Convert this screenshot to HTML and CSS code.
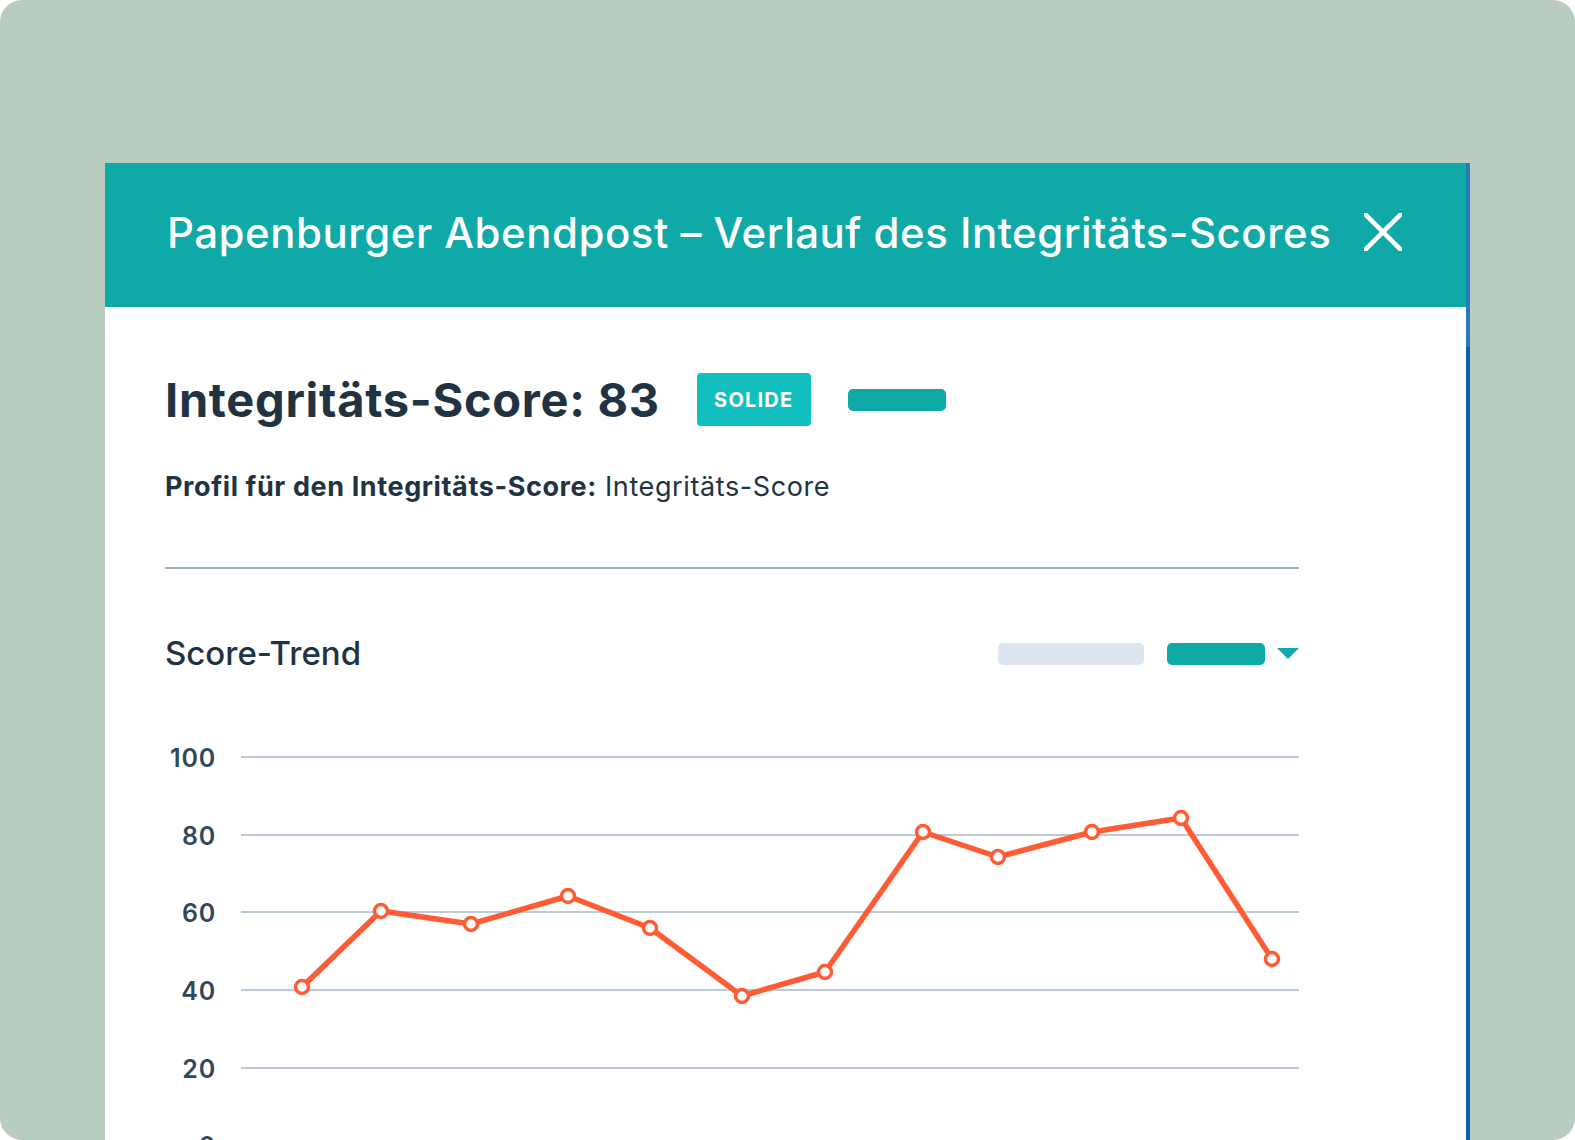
FILE: index.html
```html
<!DOCTYPE html>
<html lang="de">
  <head>
    <meta charset="UTF-8" />
    <meta name="viewport" content="width=device-width, initial-scale=1.0" />
    <title>Integritäts-Score</title>
    <link rel="stylesheet" href="styles.css">
  </head>
  <body>
    <div class="frame">
      <div class="panel">
        <div class="panel-header">
          <h2 class="panel-title">Papenburger Abendpost – Verlauf des Integritäts-Scores</h2>
          <button class="close-btn" aria-label="Schließen">
            <svg width="38" height="38" viewBox="0 0 38 38">
              <line x1="-3" y1="-3" x2="41" y2="41" />
              <line x1="41" y1="-3" x2="-3" y2="41" />
            </svg>
          </button>
        </div>

        <div class="panel-body">
          <div class="score-row">
            <h1 class="score-title">Integritäts-Score: 83</h1>
            <span class="badge">SOLIDE</span>
            <span class="bar bar-teal"></span>
          </div>

          <p class="profile"><strong>Profil für den Integritäts-Score:</strong> Integritäts-Score</p>

          <hr class="divider" />

          <div class="trend-head">
            <h3 class="trend-title">Score-Trend</h3>
            <div class="trend-tools">
              <span class="bar bar-grey"></span>
              <span class="bar bar-teal"></span>
              <span class="caret"></span>
            </div>
          </div>

          <!-- score history, y = 37 + (100 - score) * 3.88 -->
          <svg class="chart" width="1134" height="440" viewBox="0 0 1134 440">
            <g class="grid">
              <line x1="76" y1="37" x2="1134" y2="37" />
              <line x1="76" y1="115" x2="1134" y2="115" />
              <line x1="76" y1="192" x2="1134" y2="192" />
              <line x1="76" y1="270" x2="1134" y2="270" />
              <line x1="76" y1="348" x2="1134" y2="348" />
              <line x1="76" y1="425" x2="1134" y2="425" />
            </g>
            <g class="axis">
              <text x="51" y="38">100</text>
              <text x="51" y="116">80</text>
              <text x="51" y="193">60</text>
              <text x="51" y="271">40</text>
              <text x="51" y="349">20</text>
              <text x="51" y="426">0</text>
            </g>
            <polyline class="trend-line"
              points="137,267 216,191 306,204 403,176 485,208 577,276 660,252 758,112 833,137 927,112 1016,98 1107,239" />
            <g class="dots">
              <circle cx="137" cy="267" r="6.5" />
              <circle cx="216" cy="191" r="6.5" />
              <circle cx="306" cy="204" r="6.5" />
              <circle cx="403" cy="176" r="6.5" />
              <circle cx="485" cy="208" r="6.5" />
              <circle cx="577" cy="276" r="6.5" />
              <circle cx="660" cy="252" r="6.5" />
              <circle cx="758" cy="112" r="6.5" />
              <circle cx="833" cy="137" r="6.5" />
              <circle cx="927" cy="112" r="6.5" />
              <circle cx="1016" cy="98" r="6.5" />
              <circle cx="1107" cy="239" r="6.5" />
            </g>
          </svg>
        </div>
      </div>
    </div>
  </body>
</html>
```

FILE: styles.css
```css
* {
  margin: 0;
  padding: 0;
  box-sizing: border-box;
}

body {
  font-family: Inter, "Noto Sans", sans-serif;
  background-color: #fff;
  color: #213343;
}

.frame {
  width: 1575px;
  height: 1140px;
  padding: 163px 0 0 105px;
  background-color: #b8cdbf;
  border-radius: 22px;
  overflow: hidden;
}

.panel {
  width: 1365px;
  min-height: 1100px;
  padding-right: 4px;
  background:
    linear-gradient(#2b79b7 184px, #0a63a8 184px) right top / 4px 100% no-repeat,
    #fff;
}

.panel-header {
  height: 144px;
  padding: 0 64px 6px 62px;
  display: flex;
  align-items: center;
  justify-content: space-between;
  background-color: #0fa9a8;
}

.panel-title {
  font-size: 42px;
  font-weight: 500;
  letter-spacing: 0.5px;
  color: #fff;
}

.close-btn {
  width: 38px;
  height: 38px;
  background: none;
  border: none;
  cursor: pointer;
}

.close-btn svg {
  display: block;
  stroke: #fff;
  stroke-width: 4.5;
}

.panel-body {
  padding: 66px 167px 0 60px;
}

.score-row {
  display: flex;
  align-items: center;
  gap: 37px;
}

.score-title {
  font-size: 47px;
  line-height: 53px;
  font-weight: 700;
  letter-spacing: 0.7px;
}

.badge {
  width: 114px;
  height: 53px;
  display: flex;
  align-items: center;
  justify-content: center;
  background-color: #12bfbf;
  color: #fff;
  font-size: 20px;
  font-weight: 700;
  letter-spacing: 1.2px;
  border-radius: 4px;
}

.bar {
  display: block;
  height: 22px;
  border-radius: 5px;
}

.bar-teal {
  width: 98px;
  background-color: #0fa9a8;
}

.bar-grey {
  width: 146px;
  background-color: #dde5ee;
}

.profile {
  margin-top: 45px;
  font-size: 27px;
  line-height: 32px;
  letter-spacing: 0.6px;
}

.divider {
  margin-top: 64px;
  border: none;
  height: 2px;
  background-color: #99afc6;
}

.trend-head {
  margin-top: 68px;
  display: flex;
  align-items: center;
  justify-content: space-between;
}

.trend-title {
  font-size: 33px;
  line-height: 33px;
  font-weight: 500;
}

.trend-tools {
  display: flex;
  align-items: center;
  gap: 23px;
}

.caret {
  width: 0;
  height: 0;
  margin-left: -11px;
  border-left: 11px solid transparent;
  border-right: 11px solid transparent;
  border-top: 11px solid #0fa9a8;
}

.chart {
  display: block;
  margin-top: 50px;
}

.grid line {
  stroke: #a7b9cb;
  stroke-width: 1.5;
}

.axis text {
  font-family: Inter, "Noto Sans", sans-serif;
  font-size: 25px;
  font-weight: 600;
  letter-spacing: 0.8px;
  fill: #33475b;
  text-anchor: end;
  dominant-baseline: central;
}

.trend-line {
  fill: none;
  stroke: #ff5c35;
  stroke-width: 5.5;
  stroke-linejoin: round;
}

.dots circle {
  fill: #fff;
  stroke: #ff5c35;
  stroke-width: 3.5;
}
```
